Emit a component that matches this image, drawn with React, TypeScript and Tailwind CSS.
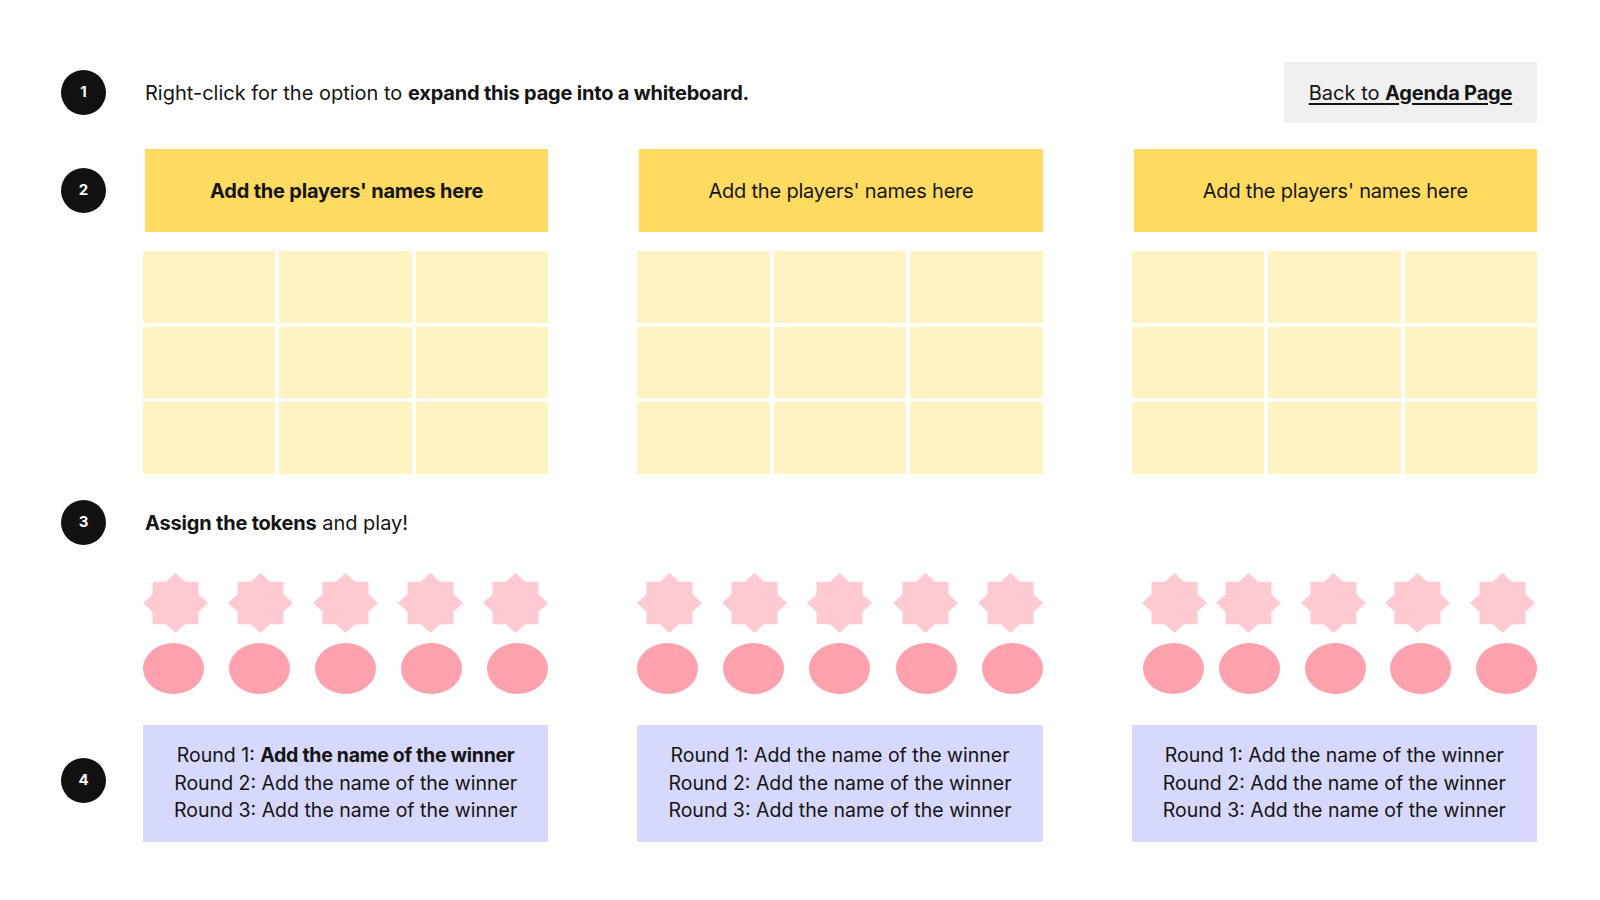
import React from "react";

const STAR_POINTS =
  "50,0 64.64,14.64 85.36,14.64 85.36,35.36 100,50 85.36,64.64 85.36,85.36 64.64,85.36 50,100 35.36,85.36 14.64,85.36 14.64,64.64 0,50 14.64,35.36 14.64,14.64 35.36,14.64";

function Star() {
  return (
    <svg viewBox="0 0 100 100" preserveAspectRatio="none" className="w-[65px] h-[60px] shrink-0">
      <polygon points={STAR_POINTS} fill="#FFCAD1" />
    </svg>
  );
}

function Ellipse({ cls }: { cls?: string }) {
  return <div className={"w-[61px] h-[51px] rounded-[50%] bg-[#FFA2AD] shrink-0 " + (cls ?? "")} />;
}

function Num({ n }: { n: number }) {
  return (
    <div className="w-[45px] h-[45px] rounded-full bg-[#111111] flex items-center justify-center text-white text-[15px] font-bold">
      {n}
    </div>
  );
}

const starRows: { wrap: string; items: string[] }[] = [
  { wrap: "justify-between", items: ["", "", "", "", ""] },
  { wrap: "justify-between", items: ["", "", "", "", ""] },
  { wrap: "pl-[10px]", items: ["", "ml-[9px]", "ml-[20px]", "ml-[19px]", "ml-[20px]"] },
];

const ellipseRows: { wrap: string; items: string[] }[] = [
  { wrap: "justify-between", items: ["", "", "", "", ""] },
  { wrap: "justify-between", items: ["", "", "", "", ""] },
  { wrap: "pl-[11px]", items: ["", "ml-[15px]", "ml-[25px]", "ml-[24px]", "ml-[25px]"] },
];

export default function App() {
  return (
    <div
      className="w-[1600px] h-[900px] bg-white text-[#141414] pl-[61px] pr-[63px] pt-[62px]"
      style={{ fontFamily: "Inter, 'Noto Sans', sans-serif" }}
    >
      {/* Row 1 */}
      <div className="flex items-center h-[61px]">
        <div className="w-[82px] shrink-0">
          <Num n={1} />
        </div>
        <div className="flex-1 flex items-center justify-between pl-[2px]">
          <p className="text-[20px]">
            Right-click for the option to <span className="font-bold tracking-[-0.2px]">expand this page into a whiteboard.</span>
          </p>
          <div className="w-[253px] h-[61px] bg-[#F0F0F0] flex items-center justify-center">
            <span className="text-[20px] underline underline-offset-[3px] decoration-[1.5px]">
              Back to <span className="font-bold tracking-[-0.2px]">Agenda Page</span>
            </span>
          </div>
        </div>
      </div>

      {/* Row 2 */}
      <div className="flex mt-[26px]">
        <div className="w-[82px] shrink-0 h-[83px] flex items-center">
          <Num n={2} />
        </div>
        <div className="flex-1 grid grid-cols-3 gap-x-[89px]">
          {[0, 1, 2].map((c) => (
            <div key={c} className="flex flex-col">
              <div className="h-[83px] bg-[#FFDB5F] flex items-center justify-center ml-[2px]">
                <span className={"text-[20px] tracking-[-0.2px] " + (c === 0 ? "font-bold" : "")}>
                  Add the players' names here
                </span>
              </div>
              <div className="mt-[19px] h-[223px] grid grid-cols-3 grid-rows-3 gap-[4px]">
                {Array.from({ length: 9 }).map((_, i) => (
                  <div key={i} className="bg-[#FEF4C1]" />
                ))}
              </div>
            </div>
          ))}
        </div>
      </div>

      {/* Row 3 */}
      <div className="flex items-center mt-[26px] h-[45px]">
        <div className="w-[82px] shrink-0">
          <Num n={3} />
        </div>
        <p className="pl-[2px] text-[20px]">
          <span className="font-bold tracking-[-0.2px]">Assign the tokens</span> and play!
        </p>
      </div>

      {/* Tokens */}
      <div className="flex mt-[28px]">
        <div className="w-[82px] shrink-0" />
        <div className="flex-1 grid grid-cols-3 gap-x-[89px]">
          {[0, 1, 2].map((c) => (
            <div key={c} className="flex flex-col">
              <div className={"flex h-[60px] " + starRows[c].wrap}>
                {starRows[c].items.map((m, i) => (
                  <div key={i} className={m}>
                    <Star />
                  </div>
                ))}
              </div>
              <div className={"flex mt-[10px] h-[51px] " + ellipseRows[c].wrap}>
                {ellipseRows[c].items.map((m, i) => (
                  <Ellipse key={i} cls={m} />
                ))}
              </div>
            </div>
          ))}
        </div>
      </div>

      {/* Row 4 */}
      <div className="flex mt-[31px]">
        <div className="w-[82px] shrink-0 pt-[33px]">
          <Num n={4} />
        </div>
        <div className="flex-1 grid grid-cols-3 gap-x-[89px]">
          {[0, 1, 2].map((c) => (
            <div
              key={c}
              className="h-[117px] bg-[#D6D9FC] flex flex-col items-center justify-center text-[19.5px] leading-[27.5px]"
            >
              <p>
                Round 1:{" "}
                {c === 0 ? (
                  <span className="font-bold tracking-[-0.3px]">Add the name of the winner</span>
                ) : (
                  "Add the name of the winner"
                )}
              </p>
              <p>Round 2: Add the name of the winner</p>
              <p>Round 3: Add the name of the winner</p>
            </div>
          ))}
        </div>
      </div>
    </div>
  );
}
